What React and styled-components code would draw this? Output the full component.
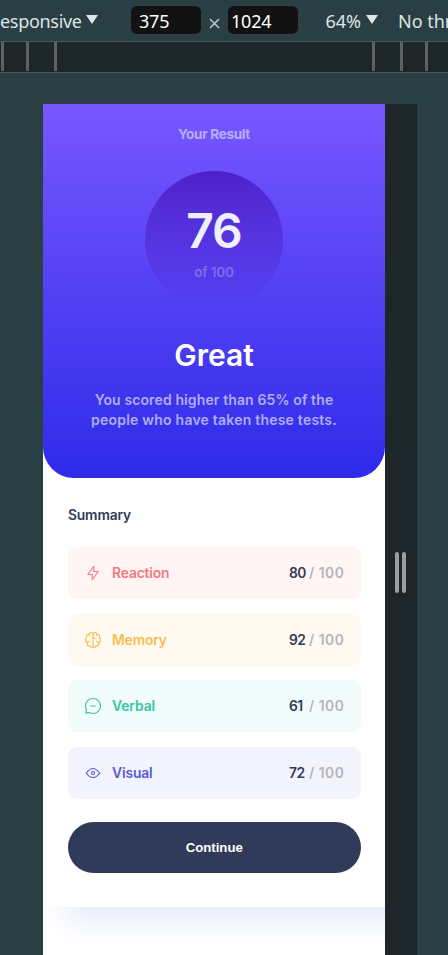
import React from "react";
import styled, { createGlobalStyle } from "styled-components";

const GlobalStyle = createGlobalStyle`
  * { box-sizing: border-box; }
  html, body { margin: 0; padding: 0; }
  body { background: #293f43; overflow: hidden; }
`;

const Page = styled.div`
  width: 448px;
  height: 955px;
  overflow: hidden;
  background: #293f43;
  display: flex;
  flex-direction: column;
  font-family: Inter, sans-serif;
`;

const Toolbar = styled.header`
  height: 41px;
  flex: none;
  display: flex;
  align-items: flex-start;
  padding-top: 6px;
  font-family: "Noto Sans", "Open Sans", sans-serif;
  font-size: 18px;
  line-height: 30px;
  color: #dfe4e5;
  white-space: nowrap;
`;

const ToolbarLabel = styled.span`
  width: ${(p) => p.$width}px;
  flex: none;
  padding-left: ${(p) => p.$indent || 0}px;
  letter-spacing: ${(p) => p.$spacing || 0}px;
`;

const Caret = styled.svg`
  width: 12px;
  height: 9px;
  flex: none;
  margin: 9px ${(p) => p.$after}px 0 0;
  fill: #dfe4e5;
`;

const SizeField = styled.span`
  width: 70px;
  height: 28px;
  flex: none;
  padding-left: ${(p) => p.$indent}px;
  border-radius: 6px;
  background: #121212;
  color: #fff;
  letter-spacing: -0.2px;
`;

const Times = styled.svg`
  width: 11px;
  height: 11px;
  flex: none;
  margin: 12px 8px 0;
  stroke: #b9c1c2;
  stroke-width: 1.7;
`;

const Ruler = styled.div`
  height: 32px;
  flex: none;
  display: flex;
  border-top: 1px solid #465a5d;
  border-bottom: 1px solid #465a5d;
  background: #1d2628;
`;

const Tick = styled.span`
  width: 3px;
  height: 29px;
  flex: none;
  margin-left: ${(p) => p.$gap}px;
  background: #5a6264;
`;

const Stage = styled.div`
  flex: 1;
  min-height: 0;
  display: flex;
  padding: 30px 0 0 43px;
`;

const Device = styled.main`
  width: 342px;
  overflow: hidden;
  background: #fff;
  border-top: 1px solid #30334e;
`;

const ResizeRail = styled.div`
  width: 32px;
  margin-top: 1px;
  padding: 448px 0 0 10.4px;
  display: flex;
  gap: 3px;
  background: #1d2628;
`;

const Grip = styled.span`
  width: 4px;
  height: 41px;
  border-radius: 2px;
  background: #9b9fa0;
`;

const Card = styled.article`
  height: 803px;
  background: #fff;
  box-shadow: 22px 17px 27px 0 #e8eefd;
`;

const Result = styled.section`
  height: 373.5px;
  padding-top: 20px;
  display: flex;
  flex-direction: column;
  align-items: center;
  border-radius: 0 0 31px 31px;
  background: linear-gradient(180deg, #7857ff 0%, #2e2be9 100%);
  text-align: center;
`;

const ResultTitle = styled.h1`
  margin: 0;
  font-size: 13.6px;
  line-height: 20px;
  font-weight: 700;
  letter-spacing: -0.35px;
  color: #baadff;
`;

const ScoreCircle = styled.div`
  width: 138px;
  height: 138px;
  margin-top: 27px;
  padding-top: 32px;
  border-radius: 50%;
  background: linear-gradient(180deg, #4d21c9 0%, rgba(37, 33, 201, 0) 100%);
`;

const Score = styled.div`
  font-size: 48px;
  line-height: 56px;
  font-weight: 600;
  letter-spacing: -1px;
  color: #eef0ff;
`;

const ScoreTotal = styled.div`
  margin-top: 3px;
  font-size: 13.6px;
  line-height: 20px;
  font-weight: 600;
  letter-spacing: -0.2px;
  color: #7f6bed;
`;

const Verdict = styled.h2`
  margin: 28px 0 0;
  font-size: 30px;
  line-height: 36px;
  font-weight: 600;
  letter-spacing: 0;
  color: #fff;
`;

const Comment = styled.p`
  margin: 17px 0 0;
  font-size: 14px;
  line-height: 20px;
  font-weight: 600;
  color: #b0adf8;
  white-space: nowrap;
`;

const CommentLine = styled.span`
  display: block;
  letter-spacing: ${(p) => p.$spacing}px;
`;

const Summary = styled.section`
  padding: 27.5px 25px 0;
`;

const SummaryTitle = styled.h3`
  margin: 0 0 22px;
  font-size: 13.8px;
  line-height: 20px;
  font-weight: 600;
  letter-spacing: -0.15px;
  color: #303b59;
`;

const ScoreList = styled.div`
  display: grid;
  gap: 14.5px;
  width: 292.5px;
`;

const ScoreRow = styled.div`
  height: 52px;
  display: flex;
  align-items: center;
  padding: 0 16px;
  border-radius: 9px;
  background: ${(p) => p.$background};
  color: ${(p) => p.$color};
  font-size: 13.8px;
  line-height: 20px;
  font-weight: 600;
`;

const RowIcon = styled.svg`
  width: 18px;
  height: 18px;
  margin-right: 10px;
  fill: none;
  stroke: currentColor;
  stroke-width: 1.25;
  stroke-linecap: round;
  stroke-linejoin: round;
`;

const RowLabel = styled.span`
  flex: 1;
  letter-spacing: ${(p) => p.$spacing}px;
`;

const Points = styled.span`
  width: 20px;
  color: #303b59;
  font-weight: 600;
  letter-spacing: -0.5px;
`;

const MaxPoints = styled.span`
  width: 35.5px;
  color: #b5b4b9;
  font-weight: 600;
  letter-spacing: 0.5px;
  white-space: nowrap;
`;

const ContinueButton = styled.button`
  display: block;
  width: 292.5px;
  height: 51px;
  margin-top: 23px;
  padding: 0;
  border: 0;
  border-radius: 26px;
  background: #303b59;
  color: #fff;
  font: bold 13.2px "Liberation Sans", Arial, sans-serif;
`;

const categories = [
  {
    name: "Reaction",
    points: 80,
    color: "#f5787f",
    background: "#fff5f5",
    spacing: -0.12,
    paths: ["M10.833 8.333V2.5l-6.666 9.167h5V17.5l6.666-9.167h-5Z"],
  },
  {
    name: "Memory",
    points: 92,
    color: "#f9bd4c",
    background: "#fffaf1",
    spacing: -0.12,
    paths: [
      "M5.833 11.667a2.5 2.5 0 1 0 .834 4.858",
      "M3.553 13.004a3.333 3.333 0 0 1-.728-5.53m.025-.067a2.083 2.083 0 0 1 2.983-2.824m.199.054A2.083 2.083 0 1 1 10 3.75v12.917a1.667 1.667 0 0 1-3.333 0M10 5.833a2.5 2.5 0 0 0 2.5 2.5m1.667 3.334a2.5 2.5 0 1 1-.834 4.858",
      "M16.447 13.004a3.334 3.334 0 0 0 .728-5.53m-.025-.067a2.083 2.083 0 0 0-2.983-2.824M10 3.75a2.085 2.085 0 0 1 2.538-2.033 2.084 2.084 0 0 1 1.43 2.92m-.635 12.03a1.667 1.667 0 0 1-3.333 0",
    ],
  },
  {
    name: "Verbal",
    points: 61,
    color: "#38c59f",
    background: "#f1fbfa",
    spacing: -0.05,
    paths: [
      "M7.5 10h5M10 18.333A8.333 8.333 0 1 0 1.667 10c0 1.518.406 2.942 1.115 4.167l-.699 3.75 3.75-.699A8.295 8.295 0 0 0 10 18.333Z",
    ],
  },
  {
    name: "Visual",
    points: 72,
    color: "#545bd0",
    background: "#f3f3fd",
    spacing: -0.1,
    paths: [
      "M10 11.667a1.667 1.667 0 1 0 0-3.334 1.667 1.667 0 0 0 0 3.334Z",
      "M17.5 10c-1.574 2.492-4.402 5-7.5 5s-5.926-2.508-7.5-5C4.416 7.632 6.66 5 10 5s5.584 2.632 7.5 5Z",
    ],
  },
];

function DropdownCaret({ after }) {
  return (
    <Caret $after={after} viewBox="0 0 12 9">
      <path d="M0 0h12L6 9Z" />
    </Caret>
  );
}

export default function App() {
  return (
    <Page>
      <GlobalStyle />
      <Toolbar>
        <ToolbarLabel $width={86} $spacing={-0.3}>
          esponsive
        </ToolbarLabel>
        <DropdownCaret after={33} />
        <SizeField $indent={8}>375</SizeField>
        <Times viewBox="0 0 11 11">
          <path d="M1 1l9 9M10 1l-9 9" />
        </Times>
        <SizeField $indent={3}>1024</SizeField>
        <ToolbarLabel $width={68} $indent={27.5}>
          64%
        </ToolbarLabel>
        <DropdownCaret after={20} />
        <ToolbarLabel $width={50}>No thr</ToolbarLabel>
      </Toolbar>
      <Ruler>
        <Tick $gap={1} />
        <Tick $gap={22} />
        <Tick $gap={25} />
        <Tick $gap={315} />
        <Tick $gap={25} />
        <Tick $gap={22} />
      </Ruler>
      <Stage>
        <Device>
          <Card>
            <Result>
              <ResultTitle>Your Result</ResultTitle>
              <ScoreCircle>
                <Score>76</Score>
                <ScoreTotal>of 100</ScoreTotal>
              </ScoreCircle>
              <Verdict>Great</Verdict>
              <Comment>
                <CommentLine $spacing={0.12}>You scored higher than 65% of the</CommentLine>
                <CommentLine $spacing={0.22}>people who have taken these tests.</CommentLine>
              </Comment>
            </Result>
            <Summary>
              <SummaryTitle>Summary</SummaryTitle>
              <ScoreList>
                {categories.map((c) => (
                  <ScoreRow key={c.name} $background={c.background} $color={c.color}>
                    <RowIcon viewBox="0 0 20 20">
                      {c.paths.map((d) => (
                        <path key={d} d={d} />
                      ))}
                    </RowIcon>
                    <RowLabel $spacing={c.spacing}>{c.name}</RowLabel>
                    <Points>{c.points}</Points>
                    <MaxPoints>/ 100</MaxPoints>
                  </ScoreRow>
                ))}
              </ScoreList>
              <ContinueButton>Continue</ContinueButton>
            </Summary>
          </Card>
        </Device>
        <ResizeRail>
          <Grip />
          <Grip />
        </ResizeRail>
      </Stage>
    </Page>
  );
}
